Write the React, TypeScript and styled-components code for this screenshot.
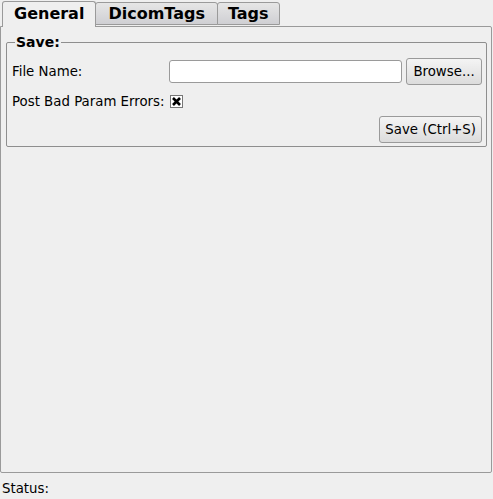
import React, { useState } from "react"
import styled, { createGlobalStyle } from "styled-components"

const GlobalStyle = createGlobalStyle`
html, body {
  margin: 0;
  padding: 0;
  background: #efefef;
}
body {
  font-family: "DejaVu Sans", sans-serif;
  font-size: 13.33px;
  color: #000;
}
`

const Window = styled.div`
width: 493px;
height: 499px;
display: flex;
flex-direction: column;
box-sizing: border-box;
`

const TabBar = styled.div`
display: flex;
align-items: flex-end;
height: 26px;
padding-left: 2px;
position: relative;
z-index: 1;
`

const Tab = styled.div<{ $active?: boolean; $pad?: number }>`
box-sizing: border-box;
height: ${p => (p.$active ? "26px" : "23px")};
margin-bottom: ${p => (p.$active ? "-1px" : "1px")};
padding: 0 ${p => p.$pad ?? 12}px;
border: 1px solid #9a9a9a;
border-bottom: ${p => (p.$active ? "none" : "1px solid #9a9a9a")};
border-radius: 3px 3px 0 0;
margin-left: ${p => (p.$active ? "0" : "-1px")};
background: ${p => (p.$active ? "#efefef" : "linear-gradient(#e6e6e6, #cfcfd3)")};
font-weight: bold;
font-size: 16px;
display: flex;
align-items: center;
padding-bottom: ${p => (p.$active ? "2px" : "0")};
`

const Pane = styled.div`
box-sizing: border-box;
width: 492px;
height: 447px;
border: 1px solid #9a9a9a;
border-radius: 0 2px 2px 2px;
padding: 7px 4px 0 5px;
`

const Group = styled.fieldset`
margin: 0;
min-width: 0;
box-sizing: border-box;
width: 481px;
height: 113px;
border: 1px solid #8e8e8e;
border-radius: 2px;
padding: 0 4px 0 5px;
`

const Legend = styled.legend`
font-weight: bold;
font-size: 14px;
padding: 0 1px;
margin-left: 3px;
`

const Row = styled.div`
display: grid;
grid-template-columns: 153px 233px 76px;
align-items: center;
column-gap: 4px;
height: 28px;
margin-top: 7px;
`

const CheckRow = styled.div`
display: flex;
align-items: center;
gap: 5px;
height: 24px;
margin-top: 4px;
`

const Label = styled.span`
font-size: 13.33px;
`

const TextInput = styled.input`
box-sizing: border-box;
height: 23px;
width: 233px;
border: 1px solid #9a9a9a;
border-radius: 3px;
background: #fff;
margin: 0;
outline: none;
`

const Button = styled.button`
box-sizing: border-box;
height: 27px;
padding: 0 5px;
border: 1px solid #9a9a9a;
border-radius: 3px;
background: linear-gradient(#f4f4f4, #dcdcdc);
font-family: "DejaVu Sans", sans-serif;
font-size: 13.33px;
color: #000;
margin: 0;
white-space: nowrap;
`

const Check = styled.span`
box-sizing: border-box;
width: 13px;
height: 13px;
border: 1px solid #777;
background: #fff;
display: inline-flex;
align-items: center;
justify-content: center;
`

const SaveRow = styled.div`
display: flex;
justify-content: flex-end;
margin-top: 3px;
`

const Status = styled.div`
padding: 8px 2px 0;
font-size: 13.33px;
`

export default function App() {
    const [checked, setChecked] = useState(true)
    return (
        <Window>
            <GlobalStyle />
            <TabBar>
                <Tab $active $pad={11}>General</Tab>
                <Tab $pad={12}>DicomTags</Tab>
                <Tab $pad={10}>Tags</Tab>
            </TabBar>
            <Pane>
                <Group>
                    <Legend>Save:</Legend>
                    <Row>
                        <Label>File Name:</Label>
                        <TextInput />
                        <Button>Browse...</Button>
                    </Row>
                    <CheckRow onClick={() => setChecked(!checked)}>
                        <Label>Post Bad Param Errors:</Label>
                        <Check>
                            {checked && (
                                <svg width="9" height="9" viewBox="0 0 9 9">
                                    <path d="M1 1 L8 8 M8 1 L1 8" stroke="#000" strokeWidth="2.6" />
                                </svg>
                            )}
                        </Check>
                    </CheckRow>
                    <SaveRow>
                        <Button>Save (Ctrl+S)</Button>
                    </SaveRow>
                </Group>
            </Pane>
            <Status>Status:</Status>
        </Window>
    )
}
